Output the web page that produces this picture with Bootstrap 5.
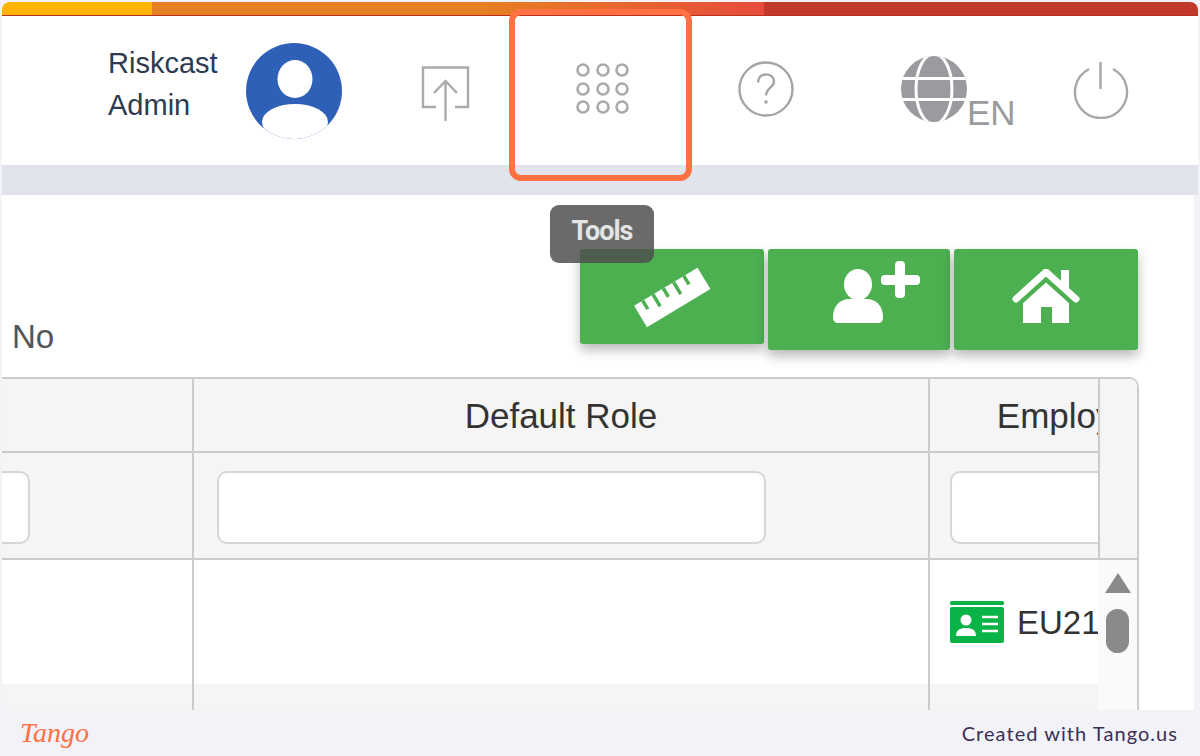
<!DOCTYPE html>
<html lang="en">
<head>
  <meta charset="UTF-8">
  <title>Tools</title>
  <link rel="stylesheet" href="https://cdn.jsdelivr.net/npm/bootstrap@5.3.0/dist/css/bootstrap.min.css">
  <style>
    body { background: #f3f2f8; font-family: "Liberation Sans", Arial, sans-serif; color: #333; overflow: hidden; }
    .shot { height: 756px; position: relative; padding: 2px 2px 0 2px; }
    .top-bar { height: 14px; flex: none; border-radius: 8px 8px 0 0; overflow: hidden; border-bottom: 1px solid #b9301f; }
    .seg-a { width: 150px; background: #ffb400; }
    .seg-b { width: 612px; background: linear-gradient(90deg, #e67e22 0%, #e67e22 55%, #e74c3c 100%); }
    .seg-c { flex: 1; background: #c0392b; }
    .head-bar { height: 149px; flex: none; background: #fff; padding-left: 106px; }
    .user-name { width: 138px; font-size: 29px; line-height: 42px; color: #2d3a4f; margin-bottom: 14px; }
    .avatar { margin-right: 79px; }
    .ico-grid { margin-left: 105px; margin-bottom: 4px; }
    .ico-help { margin-left: 108px; margin-bottom: 3px; }
    .ico-globe { margin-left: 107px; margin-bottom: 4px; }
    .ico-power { margin-left: 56px; margin-bottom: 2px; }
    .ico-upload { margin-top: 6px; }
    .lang-box { font-size: 35px; line-height: 1; color: #9a9b9f; margin-top: 44px; width: 50px; }
    .gap-band { height: 30px; flex: none; background: #e2e4ec; }
    .main-panel { flex: 1; min-height: 0; background: #fff; margin-right: 4px; overflow: hidden; }
    .tool-row { height: 183px; flex: none; padding: 54px 56px 0 10px; }
    .no-label { font-size: 33px; color: #555; margin-top: 70px; line-height: 36px; }
    .tool-btn { background: #4caf50; border: 0; border-radius: 3px; box-shadow: 0 6px 12px rgba(0, 0, 0, .28); padding: 0; height: 101px; display: flex; align-items: center; justify-content: center; }
    .tool-btn:hover { background: #4caf50; }
    .btn-rule { width: 184px; height: 95px; margin-right: 4px; }
    .btn-user { width: 182px; margin-right: 4px; }
    .btn-home { width: 184px; }
    .grid-box { width: 1137px; flex: 1; min-height: 0; margin-top: -1px; border-top: 2px solid #ccc; border-right: 2px solid #ccc; border-radius: 0 10px 0 0; overflow: hidden; }
    .table-clip { width: 1096px; flex: none; overflow: hidden; }
    .data-table { table-layout: fixed; width: 1563px; margin: 0 0 0 -301px; border-collapse: collapse; }
    .data-table th, .data-table td { border: 2px solid #ccc; border-top: 0; padding: 0; background: #fff; box-shadow: none; vertical-align: middle; }
    .data-table thead th { height: 73px; padding-top: 2px; background: #f5f5f5; font-size: 35px; font-weight: 400; text-align: center; color: #333; white-space: nowrap; }
    .data-table .filter-row td { height: 107px; background: #f5f5f5; padding: 18px 162px 0 23px; vertical-align: top; }
    .data-table .filter-row td:last-child { padding: 18px 60px 0 20px; }
    .data-table .body-row td { height: 125px; font-size: 33px; color: #333; padding-left: 20px; white-space: nowrap; border-bottom: 0; }
    .data-table .alt-row td { height: 60px; background: #f5f5f5; }
    .filter-input { height: 73px; border: 2px solid #d6d6d6; border-radius: 10px; }
    .emp-id { display: flex; align-items: center; gap: 13px; margin-top: -1px; }
    .emp-id span { margin-top: 2px; }
    .scroll-col { flex: 1; background: #fafafa; }
    .scroll-top { height: 181px; background: #f5f5f5; border-left: 2px solid #ccc; border-bottom: 2px solid #ccc; }
    .scroll-arrow { width: 0; height: 0; margin: 13px auto 0; border-left: 13px solid transparent; border-right: 13px solid transparent; border-bottom: 20px solid #8a8a8a; }
    .scroll-thumb { width: 23px; height: 44px; margin: 16px auto 0; border-radius: 12px; background: #8a8a8a; }
    .foot-bar { height: 46px; flex: none; margin: 0 -2px; padding: 0 22px 0 20px; background: #f3f2f8; border-radius: 0 0 10px 10px; }
    .tango-logo { font-family: "Liberation Serif", serif; font-style: italic; font-size: 28px; color: #ff7043; line-height: 1; font-weight: 400; }
    .made-with { font-family: "Lato", sans-serif; font-size: 20px; color: #3b3054; letter-spacing: 1.05px; }
    .mark-box { position: absolute; left: 509px; top: 9px; width: 183px; height: 172px; border: 6px solid #ff7043; border-radius: 12px; pointer-events: none; }
    .tip-box { position: absolute; left: 550px; top: 205px; width: 104px; height: 58px; border-radius: 9px; background: rgba(78, 78, 78, .84); color: #e4e4e4; font-family: "Roboto", sans-serif; font-weight: 700; font-size: 27px; letter-spacing: -1px; padding-top: 6px; text-align: center; }
  </style>
</head>
<body>
  <div class="shot d-flex flex-column">
    <div class="top-bar d-flex">
      <div class="seg-a"></div>
      <div class="seg-b"></div>
      <div class="seg-c"></div>
    </div>

    <header class="head-bar d-flex align-items-center">
      <div class="user-name">Riskcast<br>Admin</div>
      <svg class="avatar" width="96" height="96" viewBox="0 0 96 96">
        <defs><clipPath id="avatarClip"><circle cx="48" cy="48" r="48"/></clipPath></defs>
        <circle cx="48" cy="48" r="48" fill="#2f60b8"/>
        <g clip-path="url(#avatarClip)" fill="#fff">
          <ellipse cx="49" cy="36" rx="17.5" ry="19"/>
          <ellipse cx="49" cy="79" rx="33" ry="18"/>
        </g>
      </svg>
      <svg class="ico-upload" width="50" height="56" viewBox="0 0 50 56" fill="none" stroke="#aaa" stroke-width="2.4">
        <path d="M15 41H2V1.500H47V41H34"/>
        <path d="M24.500 55V15M13 27L24.500 15L36 27"/>
      </svg>
      <svg class="ico-grid" width="54" height="52" viewBox="0 0 54 52" fill="none" stroke="#aaa" stroke-width="2.6">
        <circle cx="7" cy="7" r="5.500"/><circle cx="27" cy="7" r="5.500"/><circle cx="46" cy="7" r="5.500"/>
        <circle cx="7" cy="26" r="5.500"/><circle cx="27" cy="26" r="5.500"/><circle cx="46" cy="26" r="5.500"/>
        <circle cx="7" cy="44" r="5.500"/><circle cx="27" cy="44" r="5.500"/><circle cx="46" cy="44" r="5.500"/>
      </svg>
      <svg class="ico-help" width="56" height="56" viewBox="0 0 56 56" fill="none" stroke="#a5a5a5" stroke-width="2.4">
        <circle cx="28" cy="28" r="26.500"/>
        <path d="M20 21.500C20 16 23.500 13.500 28 13.500C32.500 13.500 36 16 36 20.500C36 26.500 28 27 28 34.500"/>
        <circle cx="28" cy="41" r="1.800" fill="#a5a5a5" stroke="none"/>
      </svg>
      <svg class="ico-globe" width="66" height="66" viewBox="0 0 66 66" fill="#9a9b9f">
        <defs><clipPath id="globeClip"><circle cx="33" cy="33" r="33"/></clipPath></defs>
        <g clip-path="url(#globeClip)">
          <rect width="66" height="66"/>
          <ellipse cx="33" cy="33" rx="18" ry="35" fill="none" stroke="#fff" stroke-width="3"/>
          <path d="M0 22.500H66M0 43.500H66" stroke="#fff" stroke-width="3"/>
        </g>
      </svg>
      <div class="lang-box">EN</div>
      <svg class="ico-power" width="56" height="58" viewBox="0 0 56 58" fill="none" stroke="#a8a8a8" stroke-width="2.4">
        <path d="M16 8A26 26 0 1 0 40 8"/>
        <path d="M27.500 1V28"/>
      </svg>
    </header>

    <div class="gap-band"></div>

    <main class="main-panel d-flex flex-column">
      <div class="tool-row d-flex justify-content-between align-items-start">
        <div class="no-label">No</div>
        <div class="d-flex align-items-start">
          <button type="button" class="btn tool-btn btn-rule" aria-label="Tools">
            <svg width="80" height="64" viewBox="0 0 80 64" fill="#fff">
              <g transform="rotate(-31 40 32)">
                <path d="M3 20H77V45H3Z"/>
                <path d="M13 20V30M25 20V34M37 20V30M49 20V34M61 20V30" stroke="#4caf50" stroke-width="3.500"/>
              </g>
            </svg>
          </button>
          <button type="button" class="btn tool-btn btn-user" aria-label="Add user">
            <svg width="87" height="62" viewBox="0 0 87 62" fill="#fff" style="margin-left:35px;margin-bottom:15px">
              <ellipse cx="25" cy="23.500" rx="14" ry="15.500"/>
              <path d="M0 56C0 44 8 38 16 38H34C42 38 50 44 50 56C50 60 48 62 45 62H5C2 62 0 60 0 56Z"/>
              <rect x="62" y="0" width="10" height="37" rx="4"/>
              <rect x="48" y="14" width="39" height="10" rx="4"/>
            </svg>
          </button>
          <button type="button" class="btn tool-btn btn-home" aria-label="Home">
            <svg width="68" height="54" viewBox="0 0 68 54" fill="#fff" style="margin-bottom:8px">
              <rect x="49" y="1" width="8" height="20"/>
              <path d="M11 33L34 12L57 33V54H40V38H29V54H11Z"/>
              <path d="M4 30L34 3L64 30" fill="none" stroke="#fff" stroke-width="7" stroke-linecap="round"/>
              <path d="M9 35L34 12.500L59 35" fill="none" stroke="#4caf50" stroke-width="1.600"/>
            </svg>
          </button>
        </div>
      </div>

      <div class="grid-box d-flex">
        <div class="table-clip">
          <table class="table data-table">
            <colgroup><col style="width:491px"><col style="width:736px"><col style="width:336px"></colgroup>
            <thead>
              <tr><th></th><th>Default Role</th><th>Employee ID</th></tr>
            </thead>
            <tbody>
              <tr class="filter-row">
                <td><input class="form-control filter-input" type="text" aria-label="Filter"></td>
                <td><input class="form-control filter-input" type="text" aria-label="Default Role"></td>
                <td><input class="form-control filter-input" type="text" aria-label="Employee ID"></td>
              </tr>
              <tr class="body-row">
                <td></td>
                <td></td>
                <td>
                  <div class="emp-id">
                    <svg width="54" height="42" viewBox="0 0 54 42" fill="#0ab345">
                      <rect width="54" height="4" rx="1.500"/>
                      <rect y="6" width="54" height="36" rx="2"/>
                      <circle cx="16" cy="19" r="5.500" fill="#fff"/>
                      <path d="M6 35C6 29 10 27 16 27C22 27 26 29 26 35Z" fill="#fff"/>
                      <path d="M32 16H48M32 23H48M32 30H48" stroke="#fff" stroke-width="2.600"/>
                    </svg>
                    <span>EU2104</span>
                  </div>
                </td>
              </tr>
              <tr class="alt-row"><td></td><td></td><td></td></tr>
            </tbody>
          </table>
        </div>
        <div class="scroll-col">
          <div class="scroll-top"></div>
          <div class="scroll-arrow"></div>
          <div class="scroll-thumb"></div>
        </div>
      </div>
    </main>

    <footer class="foot-bar d-flex justify-content-between align-items-center">
      <span class="tango-logo">Tango</span>
      <span class="made-with">Created with Tango.us</span>
    </footer>

    <div class="mark-box"></div>
    <div class="tip-box">Tools</div>
  </div>
  <script src="https://cdn.jsdelivr.net/npm/bootstrap@5.3.0/dist/js/bootstrap.bundle.min.js"></script>
</body>
</html>
